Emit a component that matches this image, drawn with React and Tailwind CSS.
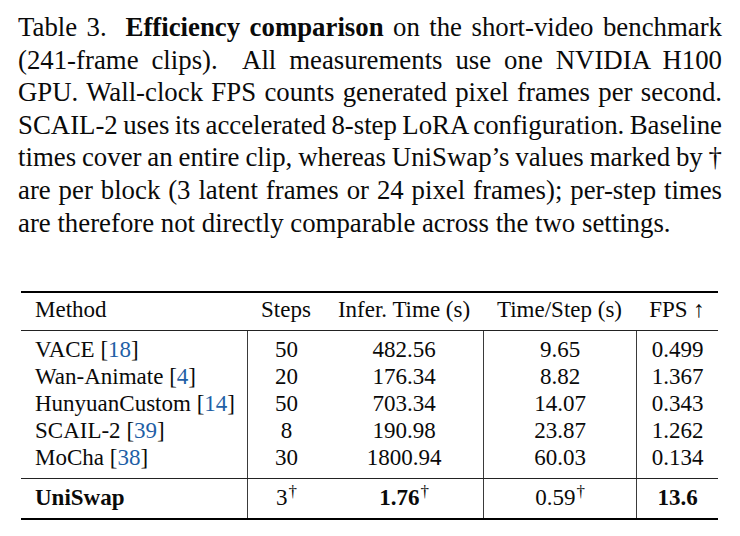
const rows = [
  { name: 'VACE', cite: '18', steps: '50', infer: '482.56', step: '9.65', fps: '0.499' },
  { name: 'Wan-Animate', cite: '4', steps: '20', infer: '176.34', step: '8.82', fps: '1.367' },
  { name: 'HunyuanCustom', cite: '14', steps: '50', infer: '703.34', step: '14.07', fps: '0.343' },
  { name: 'SCAIL-2', cite: '39', steps: '8', infer: '190.98', step: '23.87', fps: '1.262' },
  { name: 'MoCha', cite: '38', steps: '30', infer: '1800.94', step: '60.03', fps: '0.134' },
];

const captionLines = [
  <>Table 3.&nbsp; <b>Efficiency comparison</b> on the short-video benchmark</>,
  <>(241-frame clips).&nbsp; All measurements use one NVIDIA H100</>,
  <>GPU. Wall-clock FPS counts generated pixel frames per second.</>,
  <>SCAIL-2 uses its accelerated 8-step LoRA configuration. Baseline</>,
  <>times cover an entire clip, whereas UniSwap’s values marked by †</>,
  <>are per block (3 latent frames or 24 pixel frames); per-step times</>,
];

function Dag() {
  return <sup className="ml-px text-[17px] font-normal">†</sup>;
}

function Column({ children, align = 'center', line = false, className = '' }) {
  return (
    <div
      className={`flex flex-col ${align === 'left' ? 'items-start pl-[14px]' : 'items-center'} ${
        line ? 'border-l border-[#3a3a3a]' : ''
      } ${className}`}
    >
      {children}
    </div>
  );
}

function Cell({ children }) {
  return <div className="h-[27px] whitespace-nowrap leading-[27px]">{children}</div>;
}

function Cite({ n }) {
  return (
    <>
      {' '}[<span className="text-[#1f5fa6]">{n}</span>]
    </>
  );
}

export default function App() {
  return (
    <div className="h-[536px] w-[740px] bg-white text-[#0a0a0a] [font-family:'Liberation_Serif',serif]">
      <div className="px-[18px] pt-[11px] text-[26.8px] leading-[32.6px]">
        {captionLines.map((line, i) => (
          <div key={i} className="whitespace-nowrap text-justify [word-spacing:-2.5px] [text-align-last:justify]">
            {line}
          </div>
        ))}
        <div className="whitespace-nowrap">are therefore not directly comparable across the two settings.</div>
      </div>

      <div className="ml-[21px] mt-[52px] w-[697px] border-y-2 border-black text-[23px]">
        <div className="grid grid-cols-[226px_78px_158px_153px_82px] pt-[3px] pb-[7px]">
          <Column align="left"><Cell>Method</Cell></Column>
          <Column><Cell>Steps</Cell></Column>
          <Column><Cell>Infer. Time (s)</Cell></Column>
          <Column><Cell>Time/Step (s)</Cell></Column>
          <Column><Cell>FPS ↑</Cell></Column>
        </div>

        <div className="grid grid-cols-[226px_78px_158px_153px_82px] border-t border-[#222]">
          <Column align="left" className="pt-[5px] pb-[7px]">
            {rows.map((r) => (
              <Cell key={r.name}>
                {r.name}
                <Cite n={r.cite} />
              </Cell>
            ))}
          </Column>
          <Column line className="pt-[5px] pb-[7px]">
            {rows.map((r) => <Cell key={r.name}>{r.steps}</Cell>)}
          </Column>
          <Column className="pt-[5px] pb-[7px]">
            {rows.map((r) => <Cell key={r.name}>{r.infer}</Cell>)}
          </Column>
          <Column line className="pt-[5px] pb-[7px]">
            {rows.map((r) => <Cell key={r.name}>{r.step}</Cell>)}
          </Column>
          <Column line className="pt-[5px] pb-[7px]">
            {rows.map((r) => <Cell key={r.name}>{r.fps}</Cell>)}
          </Column>
        </div>

        <div className="grid grid-cols-[226px_78px_158px_153px_82px] border-t border-[#222]">
          <Column align="left" className="pt-[5px] pb-[7px]">
            <Cell><b>UniSwap</b></Cell>
          </Column>
          <Column line className="pt-[5px] pb-[7px]">
            <Cell>3<Dag /></Cell>
          </Column>
          <Column className="pt-[5px] pb-[7px]">
            <Cell><b>1.76</b><Dag /></Cell>
          </Column>
          <Column line className="pt-[5px] pb-[7px]">
            <Cell>0.59<Dag /></Cell>
          </Column>
          <Column line className="pt-[5px] pb-[7px]">
            <Cell><b>13.6</b></Cell>
          </Column>
        </div>
      </div>
    </div>
  );
}
